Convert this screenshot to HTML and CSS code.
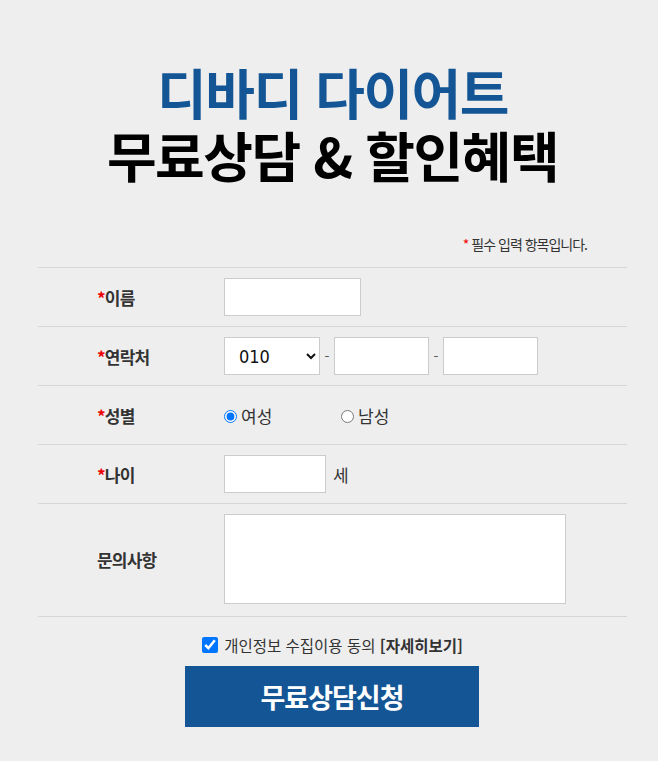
FILE: index.html
```html
<!DOCTYPE html>
<html lang="ko">
<head>
  <meta charset="UTF-8" />
  <meta name="viewport" content="width=device-width, initial-scale=1.0" />
  <title>디바디 다이어트 무료상담</title>
  <link rel="stylesheet" href="styles.css">
</head>
<body>
  <div class="wrap">
    <h1 class="title">
      <span class="brand">디바디 다이어트</span>
      <span class="sub">무료상담 &amp; 할인혜택</span>
    </h1>
    <p class="note"><em>*</em> 필수 입력 항목입니다.</p>
    <form class="form">
      <div class="row">
        <label class="label"><em>*</em>이름</label>
        <div class="field"><input type="text" class="inp w-name" /></div>
      </div>
      <div class="row">
        <label class="label"><em>*</em>연락처</label>
        <div class="field">
          <select class="sel">
            <option>010</option>
            <option>011</option>
            <option>016</option>
            <option>017</option>
            <option>019</option>
          </select>
          <span class="dash">-</span>
          <input type="text" class="inp w-tel" />
          <span class="dash">-</span>
          <input type="text" class="inp w-tel" />
        </div>
      </div>
      <div class="row">
        <label class="label"><em>*</em>성별</label>
        <div class="field radios">
          <label class="opt"><input type="radio" name="sex" checked />여성</label>
          <label class="opt"><input type="radio" name="sex" />남성</label>
        </div>
      </div>
      <div class="row">
        <label class="label"><em>*</em>나이</label>
        <div class="field"><input type="text" class="inp w-age" /><span class="unit">세</span></div>
      </div>
      <div class="row row-memo">
        <label class="label">문의사항</label>
        <div class="field"><textarea class="inp memo"></textarea></div>
      </div>
    </form>
    <div class="agree">
      <label><input type="checkbox" checked /><span>개인정보 수집이용 동의 <b>[자세히보기]</b></span></label>
    </div>
    <button class="submit" type="button">무료상담신청</button>
  </div>
</body>
</html>
```

FILE: styles.css
```css
:root {
  --blue: #135595;
  --line: #d6d6d6;
  --text: #333;
  --bg: #eeeeee;
}
body {
  margin: 0;
  background: var(--bg);
  color: var(--text);
  font-family: "Noto Sans CJK KR", "Noto Sans", sans-serif;
}
.wrap {
  width: 589px;
  margin-left: 38px;
  padding-top: 60px;
}
.title {
  margin: 0;
  text-align: center;
  font-weight: 700;
  font-size: 54px;
  line-height: 63px;
  letter-spacing: -1.5px;
}
.title span { display: block; }
.brand { color: var(--blue); }
.sub { color: #000; }
.note {
  margin: 48px 40px 0 0;
  text-align: right;
  font-size: 14px;
  letter-spacing: -1px;
  line-height: 20px;
}
.note em, .label em { color: #e00; font-style: normal; }
.form {
  margin-top: 13px;
  border-top: 1px solid var(--line);
}
.row {
  display: flex;
  align-items: center;
  border-bottom: 1px solid var(--line);
  padding: 10px 0;
  min-height: 38px;
}
.row-memo { padding-bottom: 12px; }
.label {
  width: 127px;
  padding-left: 59px;
  font-size: 17px;
  font-weight: 700;
  letter-spacing: -0.8px;
}
.field {
  display: flex;
  align-items: center;
  font-size: 17px;
}
.inp {
  box-sizing: border-box;
  height: 38px;
  border: 1px solid #ccc;
  background: #fff;
  margin: 0;
}
.w-name { width: 137px; }
.w-tel { width: 95px; }
.w-age { width: 102px; }
.memo { width: 342px; height: 90px; resize: none; }
.sel {
  box-sizing: border-box;
  width: 96px;
  height: 38px;
  border: 1px solid #ccc;
  background: #fff;
  font-family: "DejaVu Sans Condensed", "Liberation Sans", sans-serif;
  font-size: 18px;
  padding-left: 10px;
  color: #111;
}
.dash {
  width: 14px;
  text-align: center;
  font-size: 14px;
  color: #555;
}
.unit { margin-left: 7px; }
.radios { min-height: 38px; }
.opt {
  display: flex;
  align-items: center;
  width: 117px;
}
.opt input {
  margin: 2px 4px 0 0;
}
.agree {
  text-align: center;
  margin-top: 17px;
  font-size: 15.5px;
}
.agree label { display: inline-flex; align-items: center; }
.agree input {
  width: 16px;
  height: 16px;
  margin: 0 6px 0 0;
}
.submit {
  display: block;
  width: 294px;
  height: 61px;
  margin: 9px 0 0 147px;
  border: none;
  background: var(--blue);
  color: #fff;
  font-family: "Noto Sans CJK KR", sans-serif;
  font-size: 27px;
  font-weight: 700;
  letter-spacing: -1px;
}
```
